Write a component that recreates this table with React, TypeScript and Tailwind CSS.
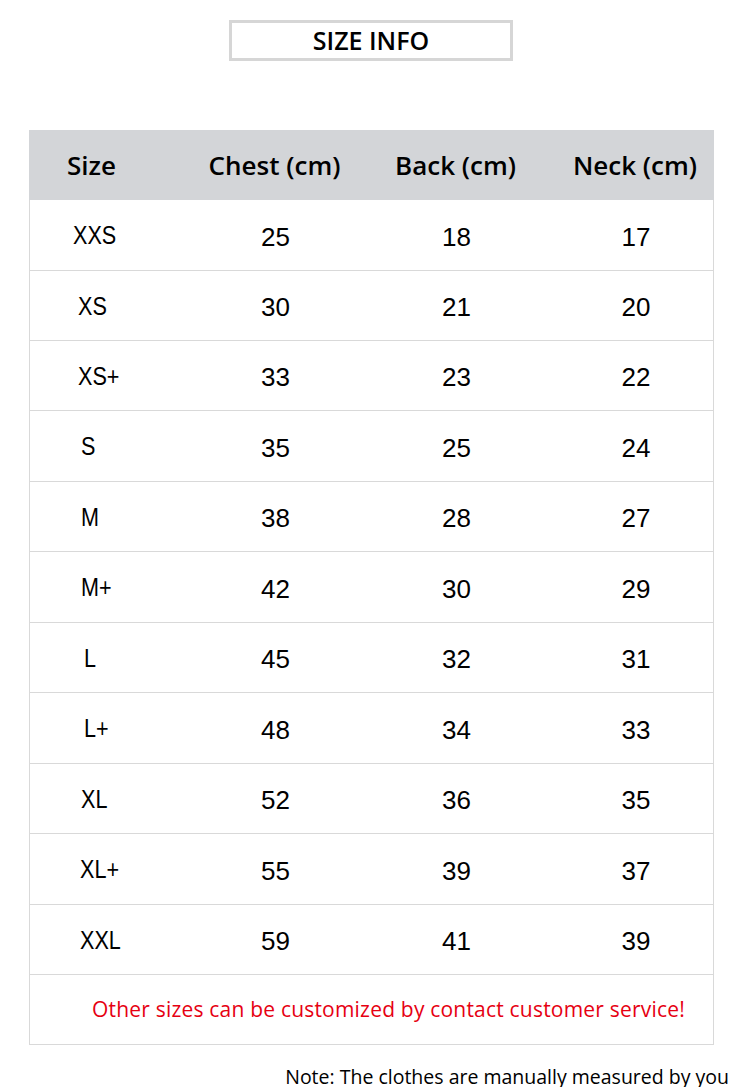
import React from 'react';

type Row = {
  size: string;
  chest: number;
  back: number;
  neck: number;
  h: string;
  pl: string;
};

// row heights alternate so the lines land where the original's do
const ROWS: Row[] = [
  { size: 'XXS', chest: 25, back: 18, neck: 17, h: 'h-[71px]', pl: 'pl-[43px]' },
  { size: 'XS', chest: 30, back: 21, neck: 20, h: 'h-[70px]', pl: 'pl-[48px]' },
  { size: 'XS+', chest: 33, back: 23, neck: 22, h: 'h-[70px]', pl: 'pl-[48px]' },
  { size: 'S', chest: 35, back: 25, neck: 24, h: 'h-[71px]', pl: 'pl-[51px]' },
  { size: 'M', chest: 38, back: 28, neck: 27, h: 'h-[70px]', pl: 'pl-[51px]' },
  { size: 'M+', chest: 42, back: 30, neck: 29, h: 'h-[71px]', pl: 'pl-[51px]' },
  { size: 'L', chest: 45, back: 32, neck: 31, h: 'h-[70px]', pl: 'pl-[54px]' },
  { size: 'L+', chest: 48, back: 34, neck: 33, h: 'h-[71px]', pl: 'pl-[54px]' },
  { size: 'XL', chest: 52, back: 36, neck: 35, h: 'h-[70px]', pl: 'pl-[51px]' },
  { size: 'XL+', chest: 55, back: 39, neck: 37, h: 'h-[71px]', pl: 'pl-[50px]' },
  { size: 'XXL', chest: 59, back: 41, neck: 39, h: 'h-[70px]', pl: 'pl-[50px]' },
];

const COLS = 'grid grid-cols-[155px_181px_181px_168px]';

const App: React.FC = () => {
  return (
    <div className="w-[750px] h-[1087px] bg-white overflow-hidden text-black">
      <div className="pt-5 pl-[229px]">
        <div className="w-[284px] h-[41px] border-[3px] border-[#d6d6d6] flex items-center justify-center font-['Open_Sans',sans-serif] font-semibold text-[25px] leading-none">
          SIZE INFO
        </div>
      </div>

      <div className="mt-[69px] ml-[29px] w-[685px]">
        <div className={`${COLS} h-[70px] bg-[#d3d5d8] items-center font-['Open_Sans',sans-serif] font-semibold text-[26px] leading-none`}>
          <div className="pl-[38px]">Size</div>
          <div className="text-center">Chest (cm)</div>
          <div className="text-center">Back (cm)</div>
          <div className="text-center pl-[10px]">Neck (cm)</div>
        </div>

        <div className="border-x border-[#d9d9d9]">
          {ROWS.map((r) => (
            <div
              key={r.size}
              className={`${COLS} ${r.h} items-center border-b border-[#d9d9d9] font-['Liberation_Sans',Arial,sans-serif] text-[26px] leading-none`}
            >
              <div className={r.pl}>
                <span className="inline-block origin-left scale-x-[0.83]">{r.size}</span>
              </div>
              <div className="text-center pt-[3px]">{r.chest}</div>
              <div className="text-center pt-[3px]">{r.back}</div>
              <div className="text-center pl-[10px] pt-[3px]">{r.neck}</div>
            </div>
          ))}
          <div className="h-[70px] border-b border-[#d9d9d9] flex items-center pl-[62px] font-['Open_Sans',sans-serif] font-medium text-[21px] tracking-[0.2px] text-[#e60012] leading-none">
            Other sizes can be customized by contact customer service!
          </div>
        </div>
      </div>

      <div className="mt-[22px] pr-[21px] text-right font-['Open_Sans',sans-serif] font-medium text-[19.5px] leading-none">
        Note: The clothes are manually measured by you
      </div>
    </div>
  );
};

export default App;
